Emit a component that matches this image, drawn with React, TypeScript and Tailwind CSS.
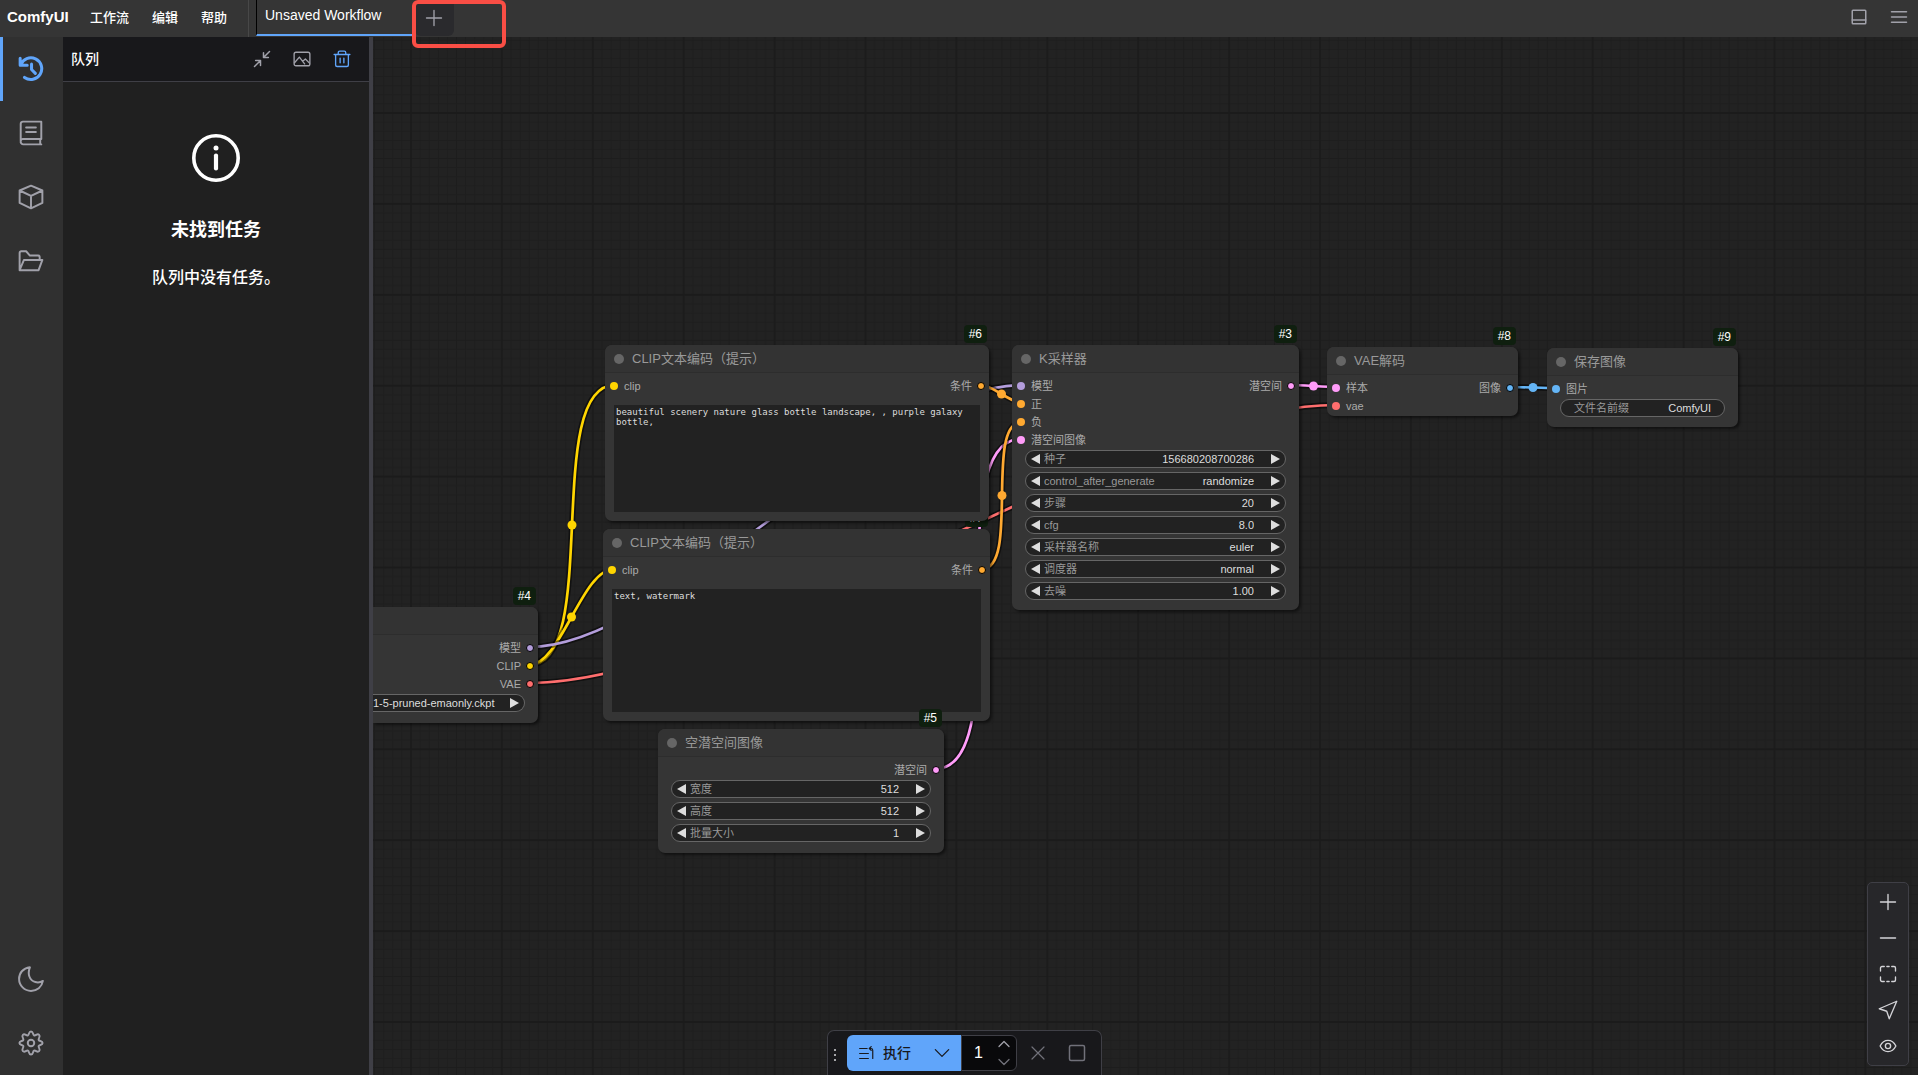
import { useState, type ReactNode } from 'react';
import clsx from 'clsx';

interface Slot {
  name: string;
  color: string;
}

interface Widget {
  label: string;
  value: string;
  type?: 'number' | 'combo';
}

interface NodeProps {
  id: number;
  className: string;
  title?: string;
  inputs?: Slot[];
  outputs?: Slot[];
  cut?: boolean;
  children?: ReactNode;
}

const dotColors: Record<string, string> = {
  clip: 'bg-[#ffd500]',
  model: 'bg-[#b39ddb]',
  vae: 'bg-[#ff6e6e]',
  latent: 'bg-[#ff9cf9]',
  cond: 'bg-[#ffa931]',
  image: 'bg-[#64b5f6]',
};

const strokeColors: Record<string, string> = {
  clip: '#ffd500',
  model: '#b39ddb',
  vae: '#ff6e6e',
  latent: '#ff9cf9',
  cond: '#ffa931',
  image: '#64b5f6',
};

// [x1, y1, x2, y2, type] in canvas coordinates
const links: [number, number, number, number, string][] = [
  [156, 628, 242, 348, 'clip'],
  [156, 628, 241, 532, 'clip'],
  [156, 610, 648, 348, 'model'],
  [156, 646, 963, 368, 'vae'],
  [562, 732, 648, 402, 'latent'],
  [608, 348, 649, 366, 'cond'],
  [609, 532, 649, 385, 'cond'],
  [917, 348, 964, 350, 'latent'],
  [1136, 350, 1184, 351, 'image'],
];

const Icon = ({ size, width = 1.8, children }: { size: number; width?: number; children: ReactNode }) => (
  <svg width={size} height={size} viewBox="0 0 24 24" fill="none" stroke="currentColor" strokeWidth={width} strokeLinecap="round" strokeLinejoin="round" aria-hidden="true">
    {children}
  </svg>
);

const Links = () => (
  <svg className="absolute inset-0 w-full h-full" aria-hidden="true">
    <defs>
      <pattern id="grid" width="100" height="100" patternUnits="userSpaceOnUse" patternTransform="translate(38 76) scale(0.909)">
        <path
          d="M10 0V100M20 0V100M30 0V100M40 0V100M50 0V100M60 0V100M70 0V100M80 0V100M90 0V100M0 10H100M0 20H100M0 30H100M0 40H100M0 50H100M0 60H100M0 70H100M0 80H100M0 90H100"
          stroke="#1d1d1d"
          strokeWidth="1"
        />
        <path d="M0 0V100M100 0V100M0 0H100M0 100H100" stroke="#1b1b1b" strokeWidth="2" />
      </pattern>
    </defs>
    <rect width="100%" height="100%" fill="url(#grid)" />
    {links.map(([x1, y1, x2, y2, type], i) => {
      const bend = Math.hypot(x2 - x1, y2 - y1) / 4;
      const d = `M${x1} ${y1}C${x1 + bend} ${y1} ${x2 - bend} ${y2} ${x2} ${y2}`;
      return (
        <g key={i} fill="none">
          <path d={d} stroke="#000" strokeOpacity="0.5" strokeWidth="6" />
          <path d={d} stroke={strokeColors[type]} strokeWidth="2.7" />
          <circle cx={(x1 + x2) / 2} cy={(y1 + y2) / 2} r="4.5" fill={strokeColors[type]} />
        </g>
      );
    })}
  </svg>
);

const GraphNode = ({ id, className, title, inputs = [], outputs = [], cut, children }: NodeProps) => {
  const rows = Math.max(inputs.length, outputs.length);
  return (
    <section className={clsx('absolute flex flex-col bg-[#353535] shadow-[2px_2px_3px_rgba(0,0,0,0.5)]', cut ? 'rounded-r-[7px]' : 'rounded-[7px]', className)}>
      <span className="absolute -top-5 right-[2px] h-[18px] px-[5px] rounded-[4px] bg-[#0f1f0f] text-white text-[12px] leading-[18px]">#{id}</span>
      <header className={clsx('h-[28px] shrink-0 flex items-center gap-[8px] pl-[9px] bg-[#333] border-b border-[#2d2d2d]', cut ? 'rounded-tr-[7px]' : 'rounded-t-[7px]')}>
        {title && (
          <>
            <span className="size-[10px] rounded-full bg-[#666]" />
            <h2 className="text-[13px] leading-[18px] text-[#999]">{title}</h2>
          </>
        )}
      </header>
      <div className="pt-[4px]">
        {Array.from({ length: rows }, (_, i) => (
          <div key={i} className="h-[18px] pl-[5px] pr-[4px] flex items-center text-[11px] leading-[18px] text-[#aaa]">
            {inputs[i] && (
              <span className="flex items-center gap-[6px]">
                <span className={clsx('size-[8px] rounded-full', dotColors[inputs[i].color])} />
                {inputs[i].name}
              </span>
            )}
            {outputs[i] && (
              <span className="ml-auto flex items-center gap-[5px]">
                {outputs[i].name}
                <span className={clsx('size-[8px] rounded-full border border-black', dotColors[outputs[i].color])} />
              </span>
            )}
          </div>
        ))}
      </div>
      {children}
    </section>
  );
};

const Arrow = ({ dir, label }: { dir: 'left' | 'right'; label: string }) => (
  <button type="button" aria-label={label} className="shrink-0 text-[#ddd]">
    <svg width="9" height="10" viewBox="0 0 9 10" fill="currentColor">
      <path d={dir === 'left' ? 'M9 0V10L0 5Z' : 'M0 0V10L9 5Z'} />
    </svg>
  </button>
);

const Widgets = ({ node, items }: { node: string; items: Widget[] }) => (
  <div className="mt-px mx-[13px] flex flex-col gap-1">
    {items.map((w) => {
      const id = `${node}-${w.label}`;
      return (
        <div key={w.label} className="h-[18px] px-[5px] flex items-center rounded-full border border-[#666] bg-[#222] text-[11px] leading-[16px]">
          <Arrow dir="left" label={`${w.label} -`} />
          <label htmlFor={id} className="ml-[4px] shrink-0 text-[#999]">{w.label}</label>
          {w.type === 'combo' ? (
            <select id={id} defaultValue={w.value} className="flex-1 min-w-0 h-4 mr-[17px] appearance-none bg-transparent text-[#ddd] [text-align-last:right] outline-none">
              <option>{w.value}</option>
            </select>
          ) : (
            <input id={id} defaultValue={w.value} className="flex-1 min-w-0 h-4 mr-[17px] bg-transparent text-right text-[#ddd] outline-none" />
          )}
          <Arrow dir="right" label={`${w.label} +`} />
        </div>
      );
    })}
  </div>
);

const Prompt = ({ label, text }: { label: string; text: string }) => (
  <textarea
    aria-label={label}
    defaultValue={text}
    className="flex-1 mt-[10px] mx-[9px] mb-[9px] p-[2px] resize-none bg-[#222] text-[#ddd] text-[9px] leading-[10px] font-['DejaVu_Sans_Mono',monospace] outline-none"
  />
);

const SideButton = ({ label, active, children }: { label: string; active?: boolean; children: ReactNode }) => (
  <button
    type="button"
    aria-label={label}
    className={clsx('w-full h-16 flex items-center justify-center border-l-[3px] pr-[4px] pb-px', active ? 'border-[#60a5fa] text-[#60a5fa]' : 'border-transparent text-[#a1a1aa]')}
  >
    {children}
  </button>
);

const TopBar = () => (
  <header className="h-[37px] shrink-0 flex bg-[#353535] text-white relative">
    <h1 className="pl-[7px] w-[90px] text-[15px] leading-[34px] font-bold">ComfyUI</h1>
    <nav className="flex gap-[23px] w-[159px] border-r border-[#484848] text-[13px] leading-[34px] font-medium">
      <button type="button" className="pb-[2px]">工作流</button>
      <button type="button" className="pb-[2px]">编辑</button>
      <button type="button" className="pb-[2px]">帮助</button>
    </nav>
    <button type="button" className="ml-[7px] w-[157px] h-[36px] pl-2 pb-1 text-left text-[14px] font-medium border-l border-l-black border-b-2 border-b-[#60a5fa]">
      Unsaved Workflow
    </button>
    <button type="button" aria-label="新建" className="ml-[2px] w-[39px] h-[36px] pr-[2px] flex items-center justify-center rounded-b-[6px] bg-[#2a2a2d] text-[#a1a1aa]">
      <Icon size={18}><path d="M12 2V22M2 12H22" /></Icon>
    </button>
    <div className="ml-auto flex items-center gap-[22px] pr-[10px] pb-[3px] text-[#a1a1aa]">
      <button type="button" aria-label="底部面板">
        <Icon size={18} width={2}><rect x="3" y="3" width="18" height="18" rx="1" /><path d="M3 16H21" /></Icon>
      </button>
      <button type="button" aria-label="菜单">
        <Icon size={18} width={2}><path d="M2 5H22M2 12H22M2 19H22" /></Icon>
      </button>
    </div>
    <span className="absolute z-20 left-[412px] top-0 w-[94px] h-[48px] border-4 border-[#f94e45] rounded-[6px] pointer-events-none" />
  </header>
);

const SideBar = () => (
  <aside className="w-[63px] shrink-0 flex flex-col bg-[#303030]">
    <SideButton label="队列" active>
      <Icon size={26} width={2.8}>
        <path d="M2 2V8.500H8.500M2.500 8.300A10 10 0 1 1 6 19.800M12.500 7.500V12.500L16 16" />
      </Icon>
    </SideButton>
    <SideButton label="节点库">
      <Icon size={26}>
        <path d="M4.500 1.500H21.500V17.500H4.500A2 2 0 0 0 2.500 19.500V3.500A2 2 0 0 1 4.500 1.500ZM2.500 19.500A2.500 2.500 0 0 0 5 22.500H21.500M20.500 17.500V22.500M7.500 7H16.500M7.500 11H16.500" />
      </Icon>
    </SideButton>
    <SideButton label="模型库">
      <Icon size={26}>
        <path d="M12 1.500L22.500 6V17.500L12 22.500L1.500 17.500V6ZM1.500 6L12 11L22.500 6M12 11V22.500" />
      </Icon>
    </SideButton>
    <SideButton label="工作流">
      <Icon size={26}>
        <path d="M1.500 20.500V4.500A1.500 1.500 0 0 1 3 3H7.500L11 7H18.500A1.500 1.500 0 0 1 20 8.500V11M1.500 20.500L5.500 11H22.500L19 20.500Z" />
      </Icon>
    </SideButton>
    <div className="mt-auto">
      <SideButton label="主题">
        <Icon size={26}>
          <path d="M11 1.200C4.500 2 1 6.500 1 12C1 18 6 23 12 23C17.500 23 22 19.500 23 13.800C21 15 18.500 15.500 16 14.800C10.500 13.500 8.500 7 11 1.200Z" />
        </Icon>
      </SideButton>
      <SideButton label="设置">
        <Icon size={26}>
          <path d="M12 1.300C14.200 1.300 13.500 4.300 14.800 4.900C16.300 5.600 17.800 2.800 19.500 4.500C21.200 6.200 18.400 7.700 19.100 9.200C19.700 10.500 22.700 9.800 22.700 12C22.700 14.200 19.700 13.500 19.100 14.800C18.400 16.300 21.200 17.800 19.500 19.500C17.800 21.200 16.300 18.400 14.800 19.100C13.500 19.700 14.200 22.700 12 22.700C9.800 22.700 10.500 19.700 9.200 19.100C7.700 18.400 6.200 21.200 4.500 19.500C2.800 17.800 5.600 16.300 4.900 14.800C4.300 13.500 1.300 14.200 1.300 12C1.300 9.800 4.300 10.500 4.900 9.200C5.600 7.700 2.800 6.200 4.500 4.500C6.200 2.800 7.700 5.600 9.200 4.900C10.500 4.300 9.800 1.300 12 1.300Z" />
          <circle cx="12" cy="12" r="3" />
        </Icon>
      </SideButton>
    </div>
  </aside>
);

const QueuePanel = () => (
  <section className="w-[310px] shrink-0 flex flex-col bg-[#202020] border-r-4 border-[#3f3f46] text-white">
    <div className="h-[45px] shrink-0 flex items-center bg-[#18181b] border-b border-[#3f3f46] pl-2 pr-[18px]">
      <h2 className="text-[14px] font-medium">队列</h2>
      <div className="ml-auto flex gap-[22px] text-[#a1a1aa]">
        <button type="button" aria-label="收起">
          <Icon size={18} width={2}><path d="M22 2L14 10M14 3.500V10H20.500M2 22L10 14M10 20.500V14H3.500" /></Icon>
        </button>
        <button type="button" aria-label="图像">
          <Icon size={18}>
            <rect x="1.500" y="3" width="21" height="18" rx="2.500" />
            <path d="M2 17L8.500 9.500L15.500 18.500M13 15L16.500 12L22 17.500" />
          </Icon>
        </button>
        <button type="button" aria-label="清空" className="text-[#60a5fa]">
          <Icon size={18}><path d="M1.500 6H22.500M7 6V3.500A2 2 0 0 1 9 1.500H15A2 2 0 0 1 17 3.500V6M3.500 6V20A2 2 0 0 0 5.500 22H18.500A2 2 0 0 0 20.500 20V6M9.500 11V17M14.500 11V17" /></Icon>
        </button>
      </div>
    </div>
    <div className="pt-[52px] flex flex-col items-center text-center">
      <svg width="48" height="48" viewBox="0 0 48 48" fill="none" stroke="currentColor" aria-hidden="true">
        <circle cx="24" cy="24" r="22.200" strokeWidth="3.600" />
        <path d="M24 21.500V34.500" strokeWidth="4.200" strokeLinecap="round" />
        <circle cx="24" cy="14" r="2.500" fill="currentColor" stroke="none" />
      </svg>
      <h3 className="mt-[35px] text-[18px] leading-[27px] font-bold">未找到任务</h3>
      <p className="mt-[22px] text-[16px] leading-[24px] font-medium">队列中没有任务。</p>
    </div>
  </section>
);

const QueueBar = () => {
  const [count, setCount] = useState(1);
  return (
    <div className="absolute bottom-0 left-[454px] h-[45px] pl-[5px] pr-[15px] flex items-center rounded-t-[7px] border border-b-0 border-[#3f3f46] bg-[#18181b]">
      <svg width="4" height="16" fill="#d4d4d8" className="mt-1 mr-[10px]" aria-hidden="true">
        <circle cx="2" cy="3" r="1" />
        <circle cx="2" cy="8" r="1" />
        <circle cx="2" cy="13" r="1" />
      </svg>
      <button type="button" className="h-[36px] w-[75px] pl-3 flex items-center gap-[9px] rounded-l-[6px] bg-[#60a5fa] text-[#18181b] text-[14px] font-medium">
        <Icon size={15} width={1.9}>
          <path d="M1 4H13M1 12H15M1 20H15M17 4H19A3 3 0 0 1 22 7V20M19.500 1L16.500 4L19.500 7" />
        </Icon>
        执行
      </button>
      <button type="button" aria-label="更多" className="h-[36px] w-[39px] flex items-center justify-center bg-[#60a5fa] text-[#18181b]">
        <Icon size={16} width={1.9}><path d="M2 7L12 17L22 7" /></Icon>
      </button>
      <div className="h-[36px] w-[56px] flex items-center rounded-r-[6px] border border-[#3f3f46] bg-[#09090b]">
        <input
          aria-label="数量"
          value={count}
          onChange={(e) => setCount(Number(e.target.value) || 1)}
          className="w-[33px] bg-transparent text-center text-[16px] font-medium text-white outline-none"
        />
        <div className="flex flex-col gap-[6px] text-[#a1a1aa] ml-[3px]">
          <button type="button" aria-label="增加" onClick={() => setCount(count + 1)}>
            <Icon size={12} width={2.500}><path d="M2 17L12 7L22 17" /></Icon>
          </button>
          <button type="button" aria-label="减少" onClick={() => setCount(Math.max(1, count - 1))} className="text-[#71717a]">
            <Icon size={12} width={2.500}><path d="M2 7L12 17L22 7" /></Icon>
          </button>
        </div>
      </div>
      <button type="button" aria-label="取消" className="ml-[13px] text-[#71717a]">
        <Icon size={16}><path d="M3 3L21 21M21 3L3 21" /></Icon>
      </button>
      <button type="button" aria-label="停止" className="ml-[22px] text-[#71717a]">
        <Icon size={18} width={2}><rect x="2" y="2" width="20" height="20" rx="2" /></Icon>
      </button>
    </div>
  );
};

const ZoomTools = () => (
  <div className="absolute right-[9px] bottom-[9px] w-[42px] pt-px pb-px flex flex-col rounded-[5px] border border-[#3f3f46] bg-[#27272a] text-[#d4d4d8] [&>button]:h-9 [&>button]:flex [&>button]:items-center [&>button]:justify-center">
    <button type="button" aria-label="放大"><Icon size={18}><path d="M12 2V22M2 12H22" /></Icon></button>
    <button type="button" aria-label="缩小"><Icon size={18} width={2}><path d="M2 12H22" /></Icon></button>
    <button type="button" aria-label="适应视图">
      <Icon size={18}><path d="M2 8V4A2 2 0 0 1 4 2H7M17 2H20A2 2 0 0 1 22 4V8M22 16V20A2 2 0 0 1 20 22H17M7 22H4A2 2 0 0 1 2 20V16M10.500 2H13.500M10.500 22H13.500" /></Icon>
    </button>
    <button type="button" aria-label="选择模式">
      <Icon size={20} width={1.6}><path d="M22.500 1.500L1.500 10.500L10.500 13.500L13.500 22.500Z" /></Icon>
    </button>
    <button type="button" aria-label="显示链接">
      <Icon size={18}><path d="M1.500 12C4 7 7.500 4.500 12 4.500S20 7 22.500 12C20 17 16.500 19.500 12 19.500S4 17 1.500 12Z" /><circle cx="12" cy="12" r="3.500" /></Icon>
    </button>
  </div>
);

const Canvas = () => (
  <main className="relative flex-1 min-w-0 overflow-hidden bg-[#222]">
    <Links />

    <GraphNode
      id={4}
      cut
      className="left-0 top-[570px] w-[165px] h-[116px]"
      outputs={[{ name: '模型', color: 'model' }, { name: 'CLIP', color: 'clip' }, { name: 'VAE', color: 'vae' }]}
    >
      <div className="mt-px mr-[13px] h-[18px] pr-[5px] flex items-center rounded-r-full border border-l-0 border-[#666] bg-[#222] text-[11px]">
        <input aria-label="Checkpoint" defaultValue="1-5-pruned-emaonly.ckpt" className="flex-1 min-w-0 h-4 bg-transparent text-[#ddd] outline-none" />
        <Arrow dir="right" label="Checkpoint +" />
      </div>
    </GraphNode>

    <GraphNode id={7} title="CLIP文本编码（提示）" className="left-[230px] top-[492px] w-[387px] h-[192px]" inputs={[{ name: 'clip', color: 'clip' }]} outputs={[{ name: '条件', color: 'cond' }]}>
      <Prompt label="负面提示" text="text, watermark" />
    </GraphNode>

    <GraphNode id={6} title="CLIP文本编码（提示）" className="left-[232px] top-[308px] w-[384px] h-[176px]" inputs={[{ name: 'clip', color: 'clip' }]} outputs={[{ name: '条件', color: 'cond' }]}>
      <Prompt label="正面提示" text="beautiful scenery nature glass bottle landscape, , purple galaxy bottle," />
    </GraphNode>

    <GraphNode id={5} title="空潜空间图像" className="left-[285px] top-[692px] w-[286px] h-[124px]" outputs={[{ name: '潜空间', color: 'latent' }]}>
      <Widgets
        node="latent"
        items={[
          { label: '宽度', value: '512' },
          { label: '高度', value: '512' },
          { label: '批量大小', value: '1' },
        ]}
      />
    </GraphNode>

    <GraphNode
      id={3}
      title="K采样器"
      className="left-[639px] top-[308px] w-[287px] h-[265px]"
      inputs={[
        { name: '模型', color: 'model' },
        { name: '正', color: 'cond' },
        { name: '负', color: 'cond' },
        { name: '潜空间图像', color: 'latent' },
      ]}
      outputs={[{ name: '潜空间', color: 'latent' }]}
    >
      <Widgets
        node="sampler"
        items={[
          { label: '种子', value: '156680208700286' },
          { label: 'control_after_generate', value: 'randomize', type: 'combo' },
          { label: '步骤', value: '20' },
          { label: 'cfg', value: '8.0' },
          { label: '采样器名称', value: 'euler', type: 'combo' },
          { label: '调度器', value: 'normal', type: 'combo' },
          { label: '去噪', value: '1.00' },
        ]}
      />
    </GraphNode>

    <GraphNode
      id={8}
      title="VAE解码"
      className="left-[954px] top-[310px] w-[191px] h-[69px]"
      inputs={[{ name: '样本', color: 'latent' }, { name: 'vae', color: 'vae' }]}
      outputs={[{ name: '图像', color: 'image' }]}
    />

    <GraphNode id={9} title="保存图像" className="left-[1174px] top-[311px] w-[191px] h-[79px]" inputs={[{ name: '图片', color: 'image' }]}>
      <div className="mt-px mx-[13px] h-[18px] px-[13px] flex items-center rounded-full border border-[#666] bg-[#222] text-[11px] leading-[16px]">
        <label htmlFor="prefix" className="shrink-0 text-[#999]">文件名前缀</label>
        <input id="prefix" defaultValue="ComfyUI" className="flex-1 min-w-0 h-4 bg-transparent text-right text-[#ddd] outline-none" />
      </div>
    </GraphNode>

    <ZoomTools />
    <QueueBar />
  </main>
);

const App = () => (
  <div className="h-screen flex flex-col overflow-hidden bg-[#202020] font-['Liberation_Sans','Noto_Sans_CJK_SC',sans-serif]">
    <TopBar />
    <div className="flex-1 min-h-0 flex">
      <SideBar />
      <QueuePanel />
      <Canvas />
    </div>
  </div>
);

export default App;
